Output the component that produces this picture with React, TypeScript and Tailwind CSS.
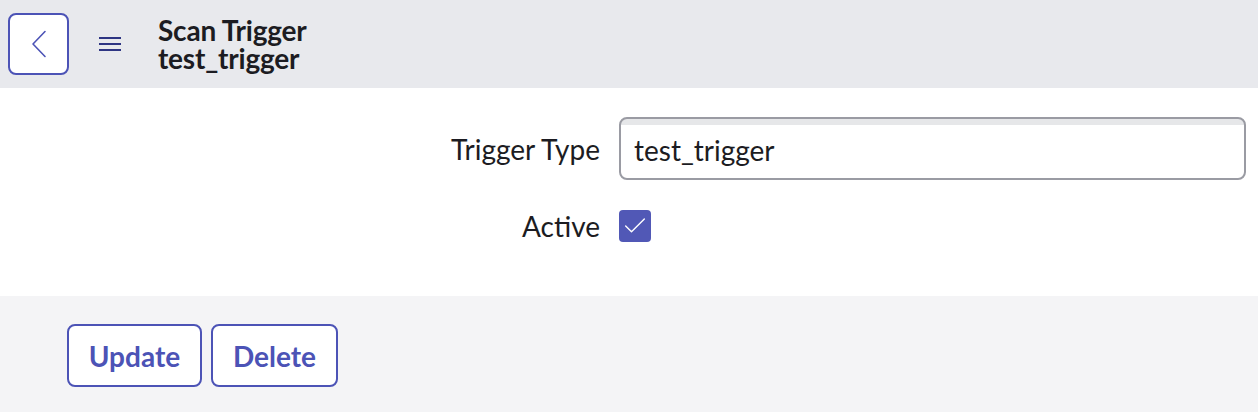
import { Check } from "lucide-react";

export default function App() {
  return (
    <main
      className="min-h-screen bg-[#f4f4f6] text-[#1c1c22]"
      style={{ fontFamily: "Lato, 'Noto Sans', sans-serif" }}
    >
      <header className="flex h-[88px] items-center bg-[#e8e9ed] pl-2">
        <button className="flex h-[62px] w-[61px] items-center justify-center rounded-lg border-2 border-[#4c53b6] bg-white text-[#4c53b6]">
          <svg width="16" height="28" viewBox="0 0 16 28" fill="none">
            <polyline
              points="14,1.5 2,14 14,26.5"
              stroke="currentColor"
              strokeWidth="1.6"
              strokeLinecap="round"
              strokeLinejoin="round"
            />
          </svg>
        </button>
        <div className="ml-[30px] text-[#2e3583]">
          <svg width="22" height="16" viewBox="0 0 22 16" fill="none">
            <path
              d="M0 2h22M0 8h22M0 14h22"
              stroke="currentColor"
              strokeWidth="1.8"
            />
          </svg>
        </div>
        <div className="ml-[37px] flex flex-col text-[28px] font-bold leading-[28px] tracking-[-0.2px] text-[#1c1c22]">
          <span>Scan Trigger</span>
          <span>test_trigger</span>
        </div>
      </header>

      <section className="bg-white pb-[54px] pt-[29px]">
        <div className="grid grid-cols-[600px_1fr] items-center gap-x-[19px] gap-y-[30px] pr-[12px]">
          <label className="text-right text-[28px] leading-[32px]">Trigger Type</label>
          <div className="flex h-[63px] items-center rounded-lg border-2 border-[#9a9ba3] bg-[linear-gradient(to_bottom,#e6e7e9_0px,#e6e7e9_6px,#ffffff_6px)] px-[13px] pt-[2px] text-[28px]">
            test_trigger
          </div>
          <label className="text-right text-[28px] leading-[32px]">Active</label>
          <div className="flex h-[32px] w-[32px] items-center justify-center rounded-[4px] bg-[#5158b6] text-white">
            <Check size={28} strokeWidth={1.2} />
          </div>
        </div>
      </section>

      <footer className="flex gap-[9px] pl-[67px] pt-[28px]">
        <button className="h-[63px] w-[135px] rounded-lg border-2 border-[#4c53b6] bg-white text-[28px] font-bold text-[#4c53b6]">
          Update
        </button>
        <button className="h-[63px] w-[127px] rounded-lg border-2 border-[#4c53b6] bg-white text-[28px] font-bold text-[#4c53b6]">
          Delete
        </button>
      </footer>
    </main>
  );
}
